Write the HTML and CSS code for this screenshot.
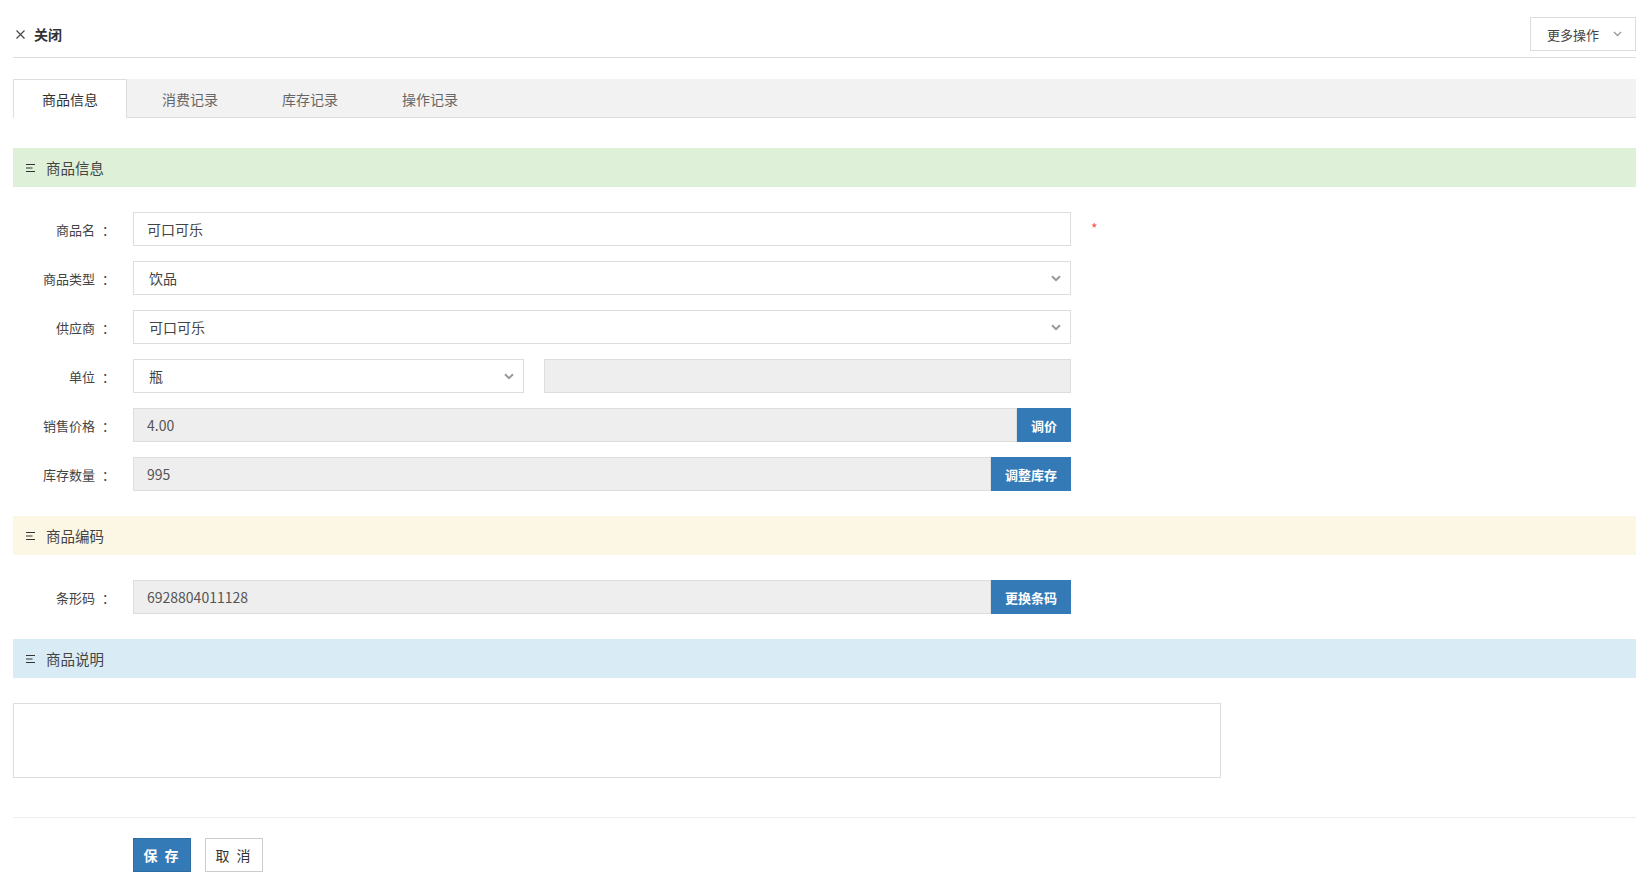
FILE: index.html
```html
<!DOCTYPE html>
<html lang="zh-CN">
<head>
<meta charset="utf-8">
<title>商品信息</title>
<link rel="stylesheet" href="styles.css">
</head>
<body>
<div class="page">
  <header class="topbar">
    <a class="close">
      <svg class="close-icon" width="9" height="9" viewBox="0 0 9 9"><path d="M0.5 0.5 L8.5 8.5 M8.5 0.5 L0.5 8.5" stroke="#444" stroke-width="1.1" fill="none"/></svg>
      <span>关闭</span>
    </a>
    <div class="more">
      <span>更多操作</span>
      <svg width="9" height="6" viewBox="0 0 9 6"><path d="M1 1 L4.5 4.5 L8 1" stroke="#999" stroke-width="1.4" fill="none"/></svg>
    </div>
  </header>

  <nav class="tabs">
    <div class="tab active">商品信息</div>
    <div class="tab">消费记录</div>
    <div class="tab">库存记录</div>
    <div class="tab">操作记录</div>
  </nav>

  <div class="section-head green">
    <svg class="menu-icon" width="10" height="10" viewBox="0 0 10 10"><path d="M0 1.5 H9 M0 5 H6.5 M0 8.5 H9" stroke="#333" stroke-width="1" fill="none"/></svg>
    <span>商品信息</span>
  </div>

  <div class="form">
    <div class="row">
      <label class="label">商品名<span class="colon">：</span></label>
      <div class="input full">可口可乐</div>
      <span class="req">*</span>
    </div>
    <div class="row">
      <label class="label">商品类型<span class="colon">：</span></label>
      <div class="input select full"><span>饮品</span>
        <svg class="chev" width="10" height="7" viewBox="0 0 10 7"><path d="M1 1.2 L5 5.2 L9 1.2" stroke="#999" stroke-width="2" fill="none"/></svg></div>
    </div>
    <div class="row">
      <label class="label">供应商<span class="colon">：</span></label>
      <div class="input select full"><span>可口可乐</span>
        <svg class="chev" width="10" height="7" viewBox="0 0 10 7"><path d="M1 1.2 L5 5.2 L9 1.2" stroke="#999" stroke-width="2" fill="none"/></svg></div>
    </div>
    <div class="row">
      <label class="label">单位<span class="colon">：</span></label>
      <div class="input select unit"><span>瓶</span>
        <svg class="chev" width="10" height="7" viewBox="0 0 10 7"><path d="M1 1.2 L5 5.2 L9 1.2" stroke="#999" stroke-width="2" fill="none"/></svg></div>
      <div class="input disabled unit-extra"></div>
    </div>
    <div class="row">
      <label class="label">销售价格<span class="colon">：</span></label>
      <div class="group">
        <div class="input disabled grow">4.00</div>
        <button class="btn-primary">调价</button>
      </div>
    </div>
    <div class="row">
      <label class="label">库存数量<span class="colon">：</span></label>
      <div class="group">
        <div class="input disabled grow">995</div>
        <button class="btn-primary">调整库存</button>
      </div>
    </div>
  </div>

  <div class="section-head yellow">
    <svg class="menu-icon" width="10" height="10" viewBox="0 0 10 10"><path d="M0 1.5 H9 M0 5 H6.5 M0 8.5 H9" stroke="#333" stroke-width="1" fill="none"/></svg>
    <span>商品编码</span>
  </div>

  <div class="form">
    <div class="row">
      <label class="label">条形码<span class="colon">：</span></label>
      <div class="group">
        <div class="input disabled grow">6928804011128</div>
        <button class="btn-primary">更换条码</button>
      </div>
    </div>
  </div>

  <div class="section-head blue">
    <svg class="menu-icon" width="10" height="10" viewBox="0 0 10 10"><path d="M0 1.5 H9 M0 5 H6.5 M0 8.5 H9" stroke="#333" stroke-width="1" fill="none"/></svg>
    <span>商品说明</span>
  </div>

  <div class="desc-wrap">
    <div class="textarea"></div>
  </div>

  <footer class="actions">
    <button class="btn-save">保 存</button>
    <button class="btn-cancel">取 消</button>
  </footer>
</div>
</body>
</html>
```

FILE: styles.css
```css
* { box-sizing: border-box; }
html, body { margin: 0; padding: 0; background: #fff; }
body {
  font-family: "Microsoft YaHei", "Noto Sans CJK SC", "Noto Sans", sans-serif;
  color: #333;
  font-size: 13px;
}
.page { padding: 0 9px 0 13px; }

.topbar {
  display: flex;
  align-items: center;
  justify-content: space-between;
  padding: 17px 0 6px;
  border-bottom: 1px solid #ddd;
}
.close {
  display: flex;
  align-items: center;
  gap: 9px;
  padding-left: 3px;
  font-size: 14px;
  font-weight: bold;
  color: #333;
  cursor: pointer;
}
.close span { line-height: 20px; }
.more {
  width: 106px;
  height: 34px;
  border: 1px solid #ddd;
  display: flex;
  align-items: center;
  padding-left: 16px;
  gap: 14px;
  font-size: 13px;
  color: #444;
}

.tabs {
  margin-top: 21px;
  height: 39px;
  background: #f2f2f2;
  border-bottom: 1px solid #ddd;
  display: flex;
  gap: 6px;
}
.tab {
  width: 114px;
  height: 39px;
  line-height: 38px;
  text-align: center;
  font-size: 14px;
  color: #666;
  border: 1px solid transparent;
  border-bottom: none;
}
.tab.active {
  background: #fff;
  border-color: #ddd;
  color: #333;
}

.section-head {
  height: 39px;
  display: flex;
  align-items: center;
  padding-left: 13px;
  gap: 10px;
  font-size: 14.5px;
  color: #444;
}
.section-head.green { margin-top: 30px; background: #dff0d8; }
.section-head.yellow { margin-top: 25px; background: #fcf6e4; }
.section-head.blue { margin-top: 25px; background: #d9ecf6; }
.menu-icon { margin-top: 1px; }

.form {
  padding-top: 25px;
  display: flex;
  flex-direction: column;
  gap: 15px;
}
.row {
  display: flex;
  align-items: center;
  height: 34px;
}
.label {
  width: 102px;
  margin-right: 18px;
  text-align: right;
  font-size: 13px;
  color: #444;
  white-space: nowrap;
}
.colon { margin-left: 7px; }
.input {
  height: 34px;
  border: 1px solid #ddd;
  background: #fff;
  padding: 0 13px;
  display: flex;
  align-items: center;
  font-size: 14px;
  color: #444;
}
.input.full { width: 938px; }
.input.select { padding-left: 15px; justify-content: space-between; padding-right: 9px; }
.input.unit { width: 391px; }
.input.disabled { background: #eee; color: #555; }
.unit-extra { width: 527px; margin-left: 20px; }
.chev { flex: none; }

.req {
  margin-left: 20px;
  color: #e55;
  font-size: 14px;
  margin-top: -2px;
}

.group { display: flex; width: 938px; height: 34px; }
.group .grow { flex: 1; }
.btn-primary {
  border: 1px solid #337ab7;
  background: #337ab7;
  color: #fff;
  font-family: inherit;
  font-size: 13px;
  font-weight: bold;
  padding: 0 13px;
  height: 34px;
  cursor: pointer;
}

.desc-wrap { padding-top: 25px; padding-bottom: 39px; border-bottom: 1px solid #eee; }
.textarea {
  width: 1208px;
  height: 75px;
  border: 1px solid #ddd;
}

.actions {
  display: flex;
  gap: 14px;
  padding-left: 120px;
  padding-top: 20px;
}
.btn-save {
  width: 58px;
  height: 34px;
  background: #337ab7;
  border: 1px solid #2e6da4;
  color: #fff;
  font-family: inherit;
  font-size: 14px;
  font-weight: bold;
  letter-spacing: 2px;
}
.btn-cancel {
  width: 58px;
  height: 34px;
  background: #fff;
  border: 1px solid #ccc;
  color: #333;
  font-family: inherit;
  font-size: 14px;
  letter-spacing: 2px;
}
```
